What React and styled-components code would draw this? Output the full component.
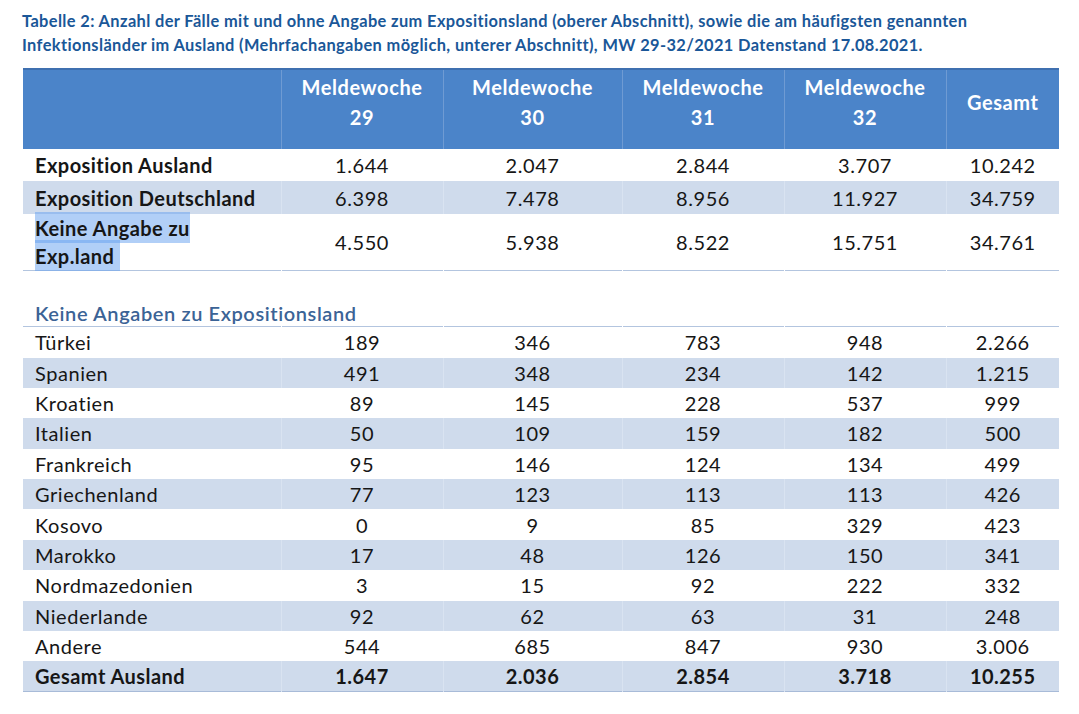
import React from "react";
import styled, { createGlobalStyle } from "styled-components";

const Global = createGlobalStyle`
  html, body { margin: 0; padding: 0; background: #ffffff; }
  body { font-family: Lato, "Open Sans", sans-serif; color: #161616; }
`;

const Page = styled.div`
  width: 1079px;
  height: 714px;
  box-sizing: border-box;
  padding: 9px 0 0 22px;
  background: #fff;
`;

const Title = styled.h1`
  margin: 0;
  font-family: Lato, "Open Sans", sans-serif;
  font-weight: 700;
  font-size: 16.4px;
  letter-spacing: 0.38px;
  line-height: 24px;
  color: #1a5798;
  white-space: nowrap;
`;

const Table = styled.table`
  margin-top: 11px;
  margin-left: 1px;
  width: 1036px;
  table-layout: fixed;
  border-collapse: collapse;
  font-family: Lato, "Open Sans", sans-serif;
  font-size: 20px;
  letter-spacing: 0.55px;
`;

const HeadRow = styled.tr`
  height: 80px;
  background: #4b84c9;
  border-top: 2px solid #3f70b0;
`;

const HeadCell = styled.th`
  color: #ffffff;
  font-weight: 700;
  font-size: 20px;
  letter-spacing: 0.6px;
  line-height: 30px;
  text-align: center;
  vertical-align: middle;
  padding: 0 0 16px 0;
  border-left: 1px solid #6f9bd3;
  &:first-child { border-left: none; }
`;

const Row = styled.tr`
  height: ${(p) => p.$h || "30.4px"};
  background: ${(p) => (p.$stripe ? "#cfdbec" : "#ffffff")};
  border-bottom: ${(p) => (p.$line ? `1px solid ${p.$line}` : "none")};
`;

const Label = styled.td`
  padding: 0 0 0 12px;
  text-align: left;
  vertical-align: middle;
  font-weight: ${(p) => (p.$bold ? 700 : 400)};
  letter-spacing: ${(p) => (p.$bold ? "0.45px" : "0.55px")};
  line-height: 28px;
  white-space: ${(p) => (p.$wrap ? "normal" : "nowrap")};
`;

const Num = styled.td`
  text-align: center;
  vertical-align: middle;
  font-weight: ${(p) => (p.$bold ? 700 : 400)};
  letter-spacing: ${(p) => (p.$bold ? "0.45px" : "0.55px")};
  line-height: 28px;
  padding: 0;
  border-left: 1px solid ${(p) => (p.$stripe ? "#d9e3f1" : "transparent")};
`;

const Selected = styled.span`
  background: rgba(100, 160, 240, 0.5);
  padding: 4px 6px 3px 0;
`;

const SectionCell = styled.td`
  padding: 0 0 0 12px;
  vertical-align: bottom;
  font-weight: 600;
  letter-spacing: 0.6px;
  color: #3b6396;
  line-height: 26px;
  white-space: nowrap;
`;

const weeks = ["29", "30", "31", "32"];

const top = [
  { label: "Exposition Ausland", v: ["1.644", "2.047", "2.844", "3.707", "10.242"], h: "32px" },
  { label: "Exposition Deutschland", v: ["6.398", "7.478", "8.956", "11.927", "34.759"], h: "33px", stripe: true },
];

const countries = [
  ["Türkei", "189", "346", "783", "948", "2.266"],
  ["Spanien", "491", "348", "234", "142", "1.215"],
  ["Kroatien", "89", "145", "228", "537", "999"],
  ["Italien", "50", "109", "159", "182", "500"],
  ["Frankreich", "95", "146", "124", "134", "499"],
  ["Griechenland", "77", "123", "113", "113", "426"],
  ["Kosovo", "0", "9", "85", "329", "423"],
  ["Marokko", "17", "48", "126", "150", "341"],
  ["Nordmazedonien", "3", "15", "92", "222", "332"],
  ["Niederlande", "92", "62", "63", "31", "248"],
  ["Andere", "544", "685", "847", "930", "3.006"],
];

export default function App() {
  return (
    <Page>
      <Global />
      <Title>
        Tabelle 2: Anzahl der Fälle mit und ohne Angabe zum Expositionsland (oberer Abschnitt), sowie die am häufigsten genannten
        <br />
        Infektionsländer im Ausland (Mehrfachangaben möglich, unterer Abschnitt), MW 29-32/2021 Datenstand 17.08.2021.
      </Title>
      <Table>
        <colgroup>
          <col style={{ width: 258 }} />
          <col style={{ width: 162 }} />
          <col style={{ width: 179 }} />
          <col style={{ width: 162 }} />
          <col style={{ width: 162 }} />
          <col style={{ width: 113 }} />
        </colgroup>
        <thead>
          <HeadRow>
            <HeadCell />
            {weeks.map((w) => (
              <HeadCell key={w}>
                Meldewoche
                <br />
                {w}
              </HeadCell>
            ))}
            <HeadCell>Gesamt</HeadCell>
          </HeadRow>
        </thead>
        <tbody>
          {top.map((r) => (
            <Row key={r.label} $h={r.h} $stripe={r.stripe}>
              <Label $bold>{r.label}</Label>
              {r.v.map((n, i) => (
                <Num key={i} $stripe={r.stripe}>{n}</Num>
              ))}
            </Row>
          ))}
          <Row $h="56px" $line="#b3c5df">
            <Label $bold $wrap>
              <Selected>
                Keine Angabe zu
                <br />
                Exp.land
              </Selected>
            </Label>
            {["4.550", "5.938", "8.522", "15.751", "34.761"].map((n, i) => (
              <Num key={i}>{n}</Num>
            ))}
          </Row>
          <Row $h="56px" $line="#b3c5df">
            <SectionCell colSpan={6}>Keine Angaben zu Expositionsland</SectionCell>
          </Row>
          {countries.map((c, idx) => (
            <Row key={c[0]} $stripe={idx % 2 === 1} $h={idx === 0 ? "31px" : undefined}>
              <Label>{c[0]}</Label>
              {c.slice(1).map((n, i) => (
                <Num key={i} $stripe={idx % 2 === 1}>{n}</Num>
              ))}
            </Row>
          ))}
          <Row $stripe $line="#a8bbd8">
            <Label $bold>Gesamt Ausland</Label>
            {["1.647", "2.036", "2.854", "3.718", "10.255"].map((n, i) => (
              <Num key={i} $bold $stripe>{n}</Num>
            ))}
          </Row>
        </tbody>
      </Table>
    </Page>
  );
}
